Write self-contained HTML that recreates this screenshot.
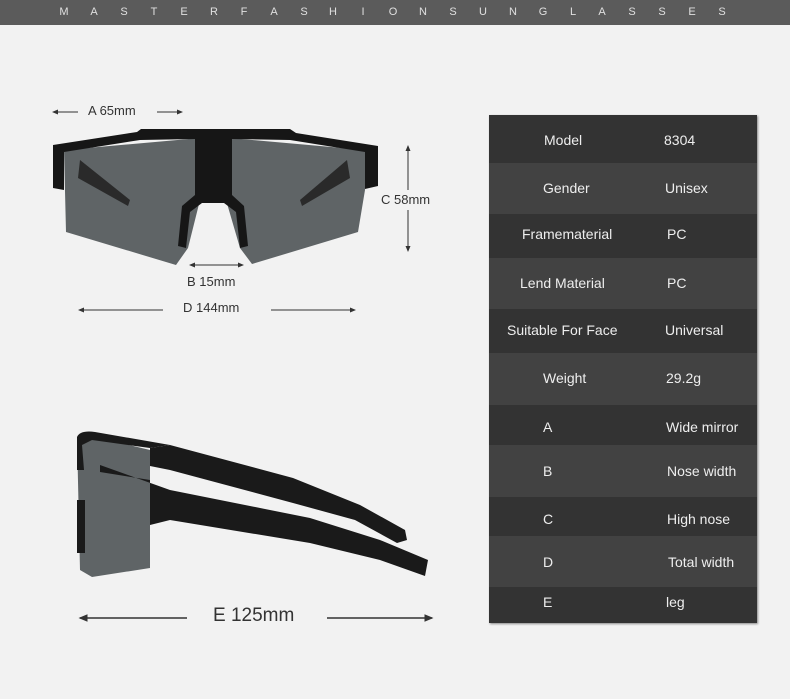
<!DOCTYPE html>
<html><head><meta charset="utf-8"><style>
body{margin:0;width:790px;height:699px;background:#f2f2f2;position:relative;overflow:hidden;font-family:"Liberation Sans",sans-serif}
.hdr{position:absolute;left:0;top:0;width:790px;height:25px;background:#5b5b5b}
.hdr span{position:absolute;top:6px;font-size:11px;color:#e0e0e0;width:12px;text-align:center}
.t{position:absolute;color:#333;font-size:13px;white-space:nowrap}
.tb{position:absolute;left:489px;top:115px;width:268px;height:508px;box-shadow:1px 1px 2px #888}
.r{position:absolute;left:0;width:268px}
.c{position:absolute;color:#eee;font-size:14px;white-space:nowrap;transform:translateY(-50%)}
</style></head><body>
<div class="hdr">
<span style="left:58px">M</span><span style="left:88px">A</span><span style="left:118px">S</span><span style="left:148px">T</span><span style="left:178px">E</span><span style="left:208px">R</span><span style="left:238px">F</span><span style="left:268px">A</span><span style="left:298px">S</span><span style="left:327px">H</span><span style="left:357px">I</span><span style="left:387px">O</span><span style="left:417px">N</span><span style="left:447px">S</span><span style="left:477px">U</span><span style="left:507px">N</span><span style="left:537px">G</span><span style="left:567px">L</span><span style="left:596px">A</span><span style="left:626px">S</span><span style="left:656px">S</span><span style="left:686px">E</span><span style="left:716px">S</span>
</div>
<svg width="790" height="699" style="position:absolute;left:0;top:0">
<defs><marker id="ah" markerWidth="6" markerHeight="6" refX="5" refY="3" orient="auto"><path d="M0,0.5 L6,3 L0,5.5z" fill="#333"/></marker></defs>
<g stroke="#333" stroke-width="1" marker-end="url(#ah)">
<line x1="78" y1="112" x2="53" y2="112"/><line x1="157" y1="112" x2="182" y2="112"/>
<line x1="408" y1="190" x2="408" y2="146"/><line x1="408" y1="210" x2="408" y2="251"/>
<line x1="216" y1="265" x2="190" y2="265"/><line x1="216" y1="265" x2="243" y2="265"/>
<line x1="163" y1="310" x2="79" y2="310"/><line x1="271" y1="310" x2="355" y2="310"/>
<line x1="187" y1="618" x2="80" y2="618" stroke-width="1.5"/><line x1="327" y1="618" x2="432" y2="618" stroke-width="1.5"/>
</g>
<!-- front glasses -->
<path d="M64,150 L200,138 L230,138 L365,150 L365,190 L358,232 L252,264 L240,248 L226,200 L200,200 L188,248 L176,265 L66,232 Z" fill="#5f6466"/>
<path d="M80,160 L130,200 L128,206 L78,178Z M347,160 L300,200 L302,206 L350,178Z" fill="#2a2a2a"/>
<path d="M53,145 L137,132 L141,129 L290,129 L296,133 L378,146 L378,186 L365,189 L365,152 L290,140 L232,139 L232,195 L244,206 L248,246 L240,248 L236,212 L224,203 L202,203 L190,212 L186,248 L178,246 L182,206 L195,195 L195,139 L140,140 L64,152 L64,190 L53,188 Z" fill="#161616"/>
<!-- side glasses -->
<path d="M77,437 L92,436 L150,450 L150,568 L92,577 L80,570 Z" fill="#5f6466"/>
<path d="M170,445 L293,478 L360,505 L405,530 L407,540 L397,543 L355,520 L293,503 L170,470 L150,466 L150,448 Z" fill="#1a1a1a"/>
<path d="M100,465 L170,490 L310,518 L380,540 L428,560 L425,576 L380,560 L310,543 L170,520 L150,525 L150,480 L100,472 Z" fill="#1a1a1a"/>
<path d="M77,437 Q80,430 95,432 L170,445 L150,448 L92,440 L82,445 L84,470 L77,470Z" fill="#1a1a1a"/>
<rect x="77" y="500" width="8" height="53" fill="#1a1a1a"/>
</svg>
<div class="t" style="left:88px;top:103px">A 65mm</div>
<div class="t" style="left:381px;top:192px">C 58mm</div>
<div class="t" style="left:187px;top:274px">B 15mm</div>
<div class="t" style="left:183px;top:300px">D 144mm</div>
<div class="t" style="left:213px;top:605px;font-size:19px">E 125mm</div>
<div class="tb">
<div class="r" style="top:0;height:48px;background:#333"></div>
<div class="r" style="top:48px;height:51px;background:#424242"></div>
<div class="r" style="top:99px;height:44px;background:#333"></div>
<div class="r" style="top:143px;height:51px;background:#424242"></div>
<div class="r" style="top:194px;height:44px;background:#333"></div>
<div class="r" style="top:238px;height:52px;background:#424242"></div>
<div class="r" style="top:290px;height:40px;background:#333"></div>
<div class="r" style="top:330px;height:52px;background:#424242"></div>
<div class="r" style="top:382px;height:39px;background:#333"></div>
<div class="r" style="top:421px;height:51px;background:#424242"></div>
<div class="r" style="top:472px;height:36px;background:#333"></div>
</div>
<div class="c" style="left:544px;top:140px">Model</div><div class="c" style="left:664px;top:140px">8304</div>
<div class="c" style="left:543px;top:188px">Gender</div><div class="c" style="left:665px;top:188px">Unisex</div>
<div class="c" style="left:522px;top:234px">Framematerial</div><div class="c" style="left:667px;top:234px">PC</div>
<div class="c" style="left:520px;top:283px">Lend Material</div><div class="c" style="left:667px;top:283px">PC</div>
<div class="c" style="left:507px;top:330px">Suitable For Face</div><div class="c" style="left:665px;top:330px">Universal</div>
<div class="c" style="left:543px;top:378px">Weight</div><div class="c" style="left:666px;top:378px">29.2g</div>
<div class="c" style="left:543px;top:427px">A</div><div class="c" style="left:666px;top:427px">Wide mirror</div>
<div class="c" style="left:543px;top:471px">B</div><div class="c" style="left:667px;top:471px">Nose width</div>
<div class="c" style="left:543px;top:519px">C</div><div class="c" style="left:667px;top:519px">High nose</div>
<div class="c" style="left:543px;top:562px">D</div><div class="c" style="left:668px;top:562px">Total width</div>
<div class="c" style="left:543px;top:602px">E</div><div class="c" style="left:666px;top:602px">leg</div>
</body></html>
